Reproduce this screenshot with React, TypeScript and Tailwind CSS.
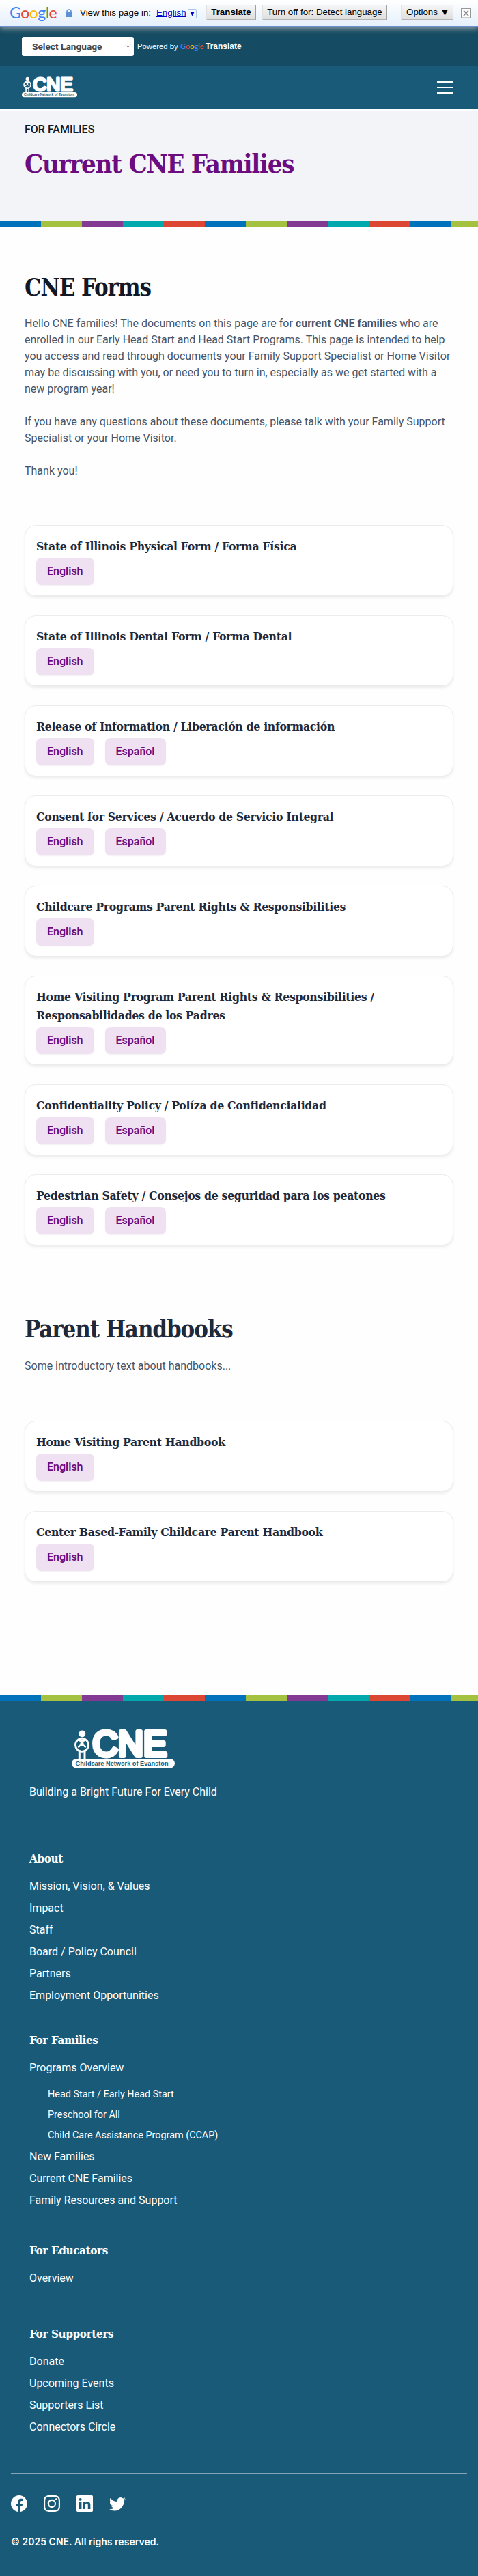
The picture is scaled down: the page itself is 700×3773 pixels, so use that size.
import { BsFacebook, BsInstagram, BsLinkedin, BsTwitter } from "react-icons/bs";

const slab =
  "[font-family:'Roboto_Slab','DejaVu_Serif_Condensed','DejaVu_Serif',serif] font-bold";

const stripeColors = ["bg-[#0072bc]", "bg-[#a4c140]", "bg-[#833a92]", "bg-[#02a9ac]", "bg-[#dc4733]"];

function Stripe() {
  return (
    <div className="flex h-[10px] w-full overflow-hidden">
      {Array.from({ length: 12 }, (_, i) => (
        <div key={i} className={`h-full w-[60px] shrink-0 ${stripeColors[i % 5]}`} />
      ))}
    </div>
  );
}

function GoogleWord({ className }: { className: string }) {
  return (
    <span className={`shrink-0 [font-family:Lato,sans-serif] ${className}`}>
      <span className="text-[#4285f4]">G</span>
      <span className="text-[#ea4335]">o</span>
      <span className="text-[#fbbc05]">o</span>
      <span className="text-[#4285f4]">g</span>
      <span className="text-[#34a853]">l</span>
      <span className="text-[#ea4335]">e</span>
    </span>
  );
}

function Logo({ className }: { className: string }) {
  return (
    <svg viewBox="0 0 151 56" className={`overflow-visible ${className}`}>
      <circle cx="15.3" cy="5.500" r="4.9" fill="#fff" />
      <circle cx="15" cy="21.800" r="9.500" fill="none" stroke="#fff" strokeWidth="2.800" />
      <path d="M9 13.500q6 4.500 12 0" fill="none" stroke="#fff" strokeWidth="3" />
      <circle cx="15" cy="19.500" r="2.500" fill="#fff" />
      <path d="M10.200 24.500q4.800 -5.500 9.600 0" fill="none" stroke="#fff" strokeWidth="2.600" strokeLinecap="round" />
      <path d="M11.300 29.500v13M19 29.500v13" stroke="#fff" strokeWidth="3" />
      <text
        x="30.500"
        y="38"
        textLength="109"
        lengthAdjust="spacingAndGlyphs"
        fontFamily="Liberation Sans"
        fontWeight="400"
        fontSize="51"
        fill="#fff"
        stroke="#fff"
        strokeWidth="6"
        strokeLinejoin="round"
      >
        CNE
      </text>
      <rect x="0" y="42" width="151" height="13.500" rx="6.700" fill="#fff" />
      <text
        x="5.500"
        y="51.800"
        textLength="136"
        lengthAdjust="spacingAndGlyphs"
        fontFamily="Liberation Sans"
        fontWeight="700"
        fontSize="9"
        fill="#195a78"
      >
        Childcare Network of Evanston
      </text>
    </svg>
  );
}

function TranslateBar() {
  const button =
    "flex h-[23px] shrink-0 items-center justify-center whitespace-nowrap border border-[#e0e0e0] border-r-[#a0a0a0] border-b-2 border-b-[#b4b4b4] bg-gradient-to-b from-[#f5f5f5] to-[#dfdfdf]";
  return (
    <div className="relative z-10 h-10 border-b border-[#e8eefa] bg-gradient-to-b from-white to-[#e4effb] [font-family:'Liberation_Sans',Arial,sans-serif] text-[13.3px] text-black shadow-[0_2px_8px_rgba(180,180,180,0.8)]">
      <div className="flex h-[39px] items-start border-b border-[#6b90da]">
        <GoogleWord className="ml-[14px] mt-[1px] w-[82px] text-[23px] leading-[34px] tracking-[-0.5px]" />
        <svg viewBox="0 0 10 12" className="mt-[13px] h-3 w-[10px] shrink-0">
          <path d="M2 6V4a3 3 0 0 1 6 0v2" fill="none" stroke="#5c8fd6" strokeWidth="1.500" />
          <rect x="0.500" y="5" width="9" height="7" fill="#5c8fd6" />
        </svg>
        <span className="ml-[11px] mt-[9px] w-[112px] shrink-0 whitespace-nowrap leading-5">View this page in:</span>
        <span className="mt-[9px] w-[46px] shrink-0 leading-5 text-[#0000cc] underline">English</span>
        <span className="mt-[13px] flex h-[14px] w-[13px] shrink-0 items-center justify-center rounded-[2px] border border-[#a9c6ec]">
          <svg viewBox="0 0 8 7" className="h-[7px] w-[7px]">
            <path d="M0.500 0h7L4 7z" fill="#0000cc" />
          </svg>
        </span>
        <div className={`ml-[14px] mt-[7px] w-[73px] font-bold ${button}`}>Translate</div>
        <div className={`ml-[9px] mt-[7px] w-[183px] ${button}`}>Turn off for: Detect language</div>
        <div className={`ml-5 mt-[7px] w-[77px] ${button}`}>
          Options
          <svg viewBox="0 0 9 9" className="ml-[6px] h-[9px] w-[9px]">
            <path d="M0 0h9L4.500 9z" fill="#000" />
          </svg>
        </div>
        <svg viewBox="0 0 15 15" className="ml-[11px] mt-[12px] h-[15px] w-[15px] shrink-0">
          <rect x="0.500" y="0.500" width="14" height="13.500" fill="#fff" stroke="#999" />
          <path d="M4 3.500l7 7.500M11 3.500l-7 7.500" stroke="#888" strokeWidth="1.800" />
        </svg>
      </div>
    </div>
  );
}

function Header() {
  return (
    <header>
      <div className="flex h-14 items-center bg-[#164c63] pl-8 [font-family:'Liberation_Sans',Arial,sans-serif] text-[11.300px] text-white">
        <div className="flex h-7 w-[164px] shrink-0 items-center justify-between rounded-[3px] bg-white pl-[15px] pr-1 [font-family:Roboto,sans-serif] text-[13.700px] font-bold text-[#444]">
          Select Language
          <svg viewBox="0 0 10 6" className="h-[6px] w-[9px]">
            <path d="M1 0.500l4 4 4-4" fill="none" stroke="#777" />
          </svg>
        </div>
        <span className="ml-[5px] w-[58px] whitespace-nowrap">Powered by</span>
        <GoogleWord className="ml-[5px] w-[37px] text-[11px] font-medium" />
        <span className="text-[12px] font-bold">Translate</span>
      </div>
      <div className="flex h-16 items-center justify-between bg-[#195a78] px-8">
        <Logo className="mb-px h-[31px] w-[81px]" />
        <div className="mr-1 flex w-6 flex-col gap-[6px]">
          <div className="h-[2px] bg-white" />
          <div className="h-[2px] bg-white" />
          <div className="h-[2px] bg-white" />
        </div>
      </div>
    </header>
  );
}

type Doc = { title: string; second?: string; langs: string[] };

const both = ["English", "Español"];
const forms: Doc[] = [
  { title: "State of Illinois Physical Form / Forma Física", langs: ["English"] },
  { title: "State of Illinois Dental Form / Forma Dental", langs: ["English"] },
  { title: "Release of Information / Liberación de información", langs: both },
  { title: "Consent for Services / Acuerdo de Servicio Integral", langs: both },
  { title: "Childcare Programs Parent Rights & Responsibilities", langs: ["English"] },
  {
    title: "Home Visiting Program Parent Rights & Responsibilities /",
    second: "Responsabilidades de los Padres",
    langs: both,
  },
  { title: "Confidentiality Policy / Políza de Confidencialidad", langs: both },
  { title: "Pedestrian Safety / Consejos de seguridad para los peatones", langs: both },
];
const handbooks: Doc[] = [
  { title: "Home Visiting Parent Handbook", langs: ["English"] },
  { title: "Center Based-Family Childcare Parent Handbook", langs: ["English"] },
];

function Cards({ docs }: { docs: Doc[] }) {
  return (
    <div className="flex flex-col gap-7">
      {docs.map((d) => (
        <div
          key={d.title}
          className="rounded-2xl border border-[#ebecef] bg-white px-4 pb-[15px] pt-[17px] shadow-[0_3px_5px_-1px_rgba(0,0,0,0.09)]"
        >
          <h3 className={`${slab} whitespace-nowrap text-[17.500px] leading-[27px] tracking-[-0.32px] text-[#1e293b]`}>
            {d.title}
            {d.second && <span className="block">{d.second}</span>}
          </h3>
          <div className="mt-[3px] flex gap-4">
            {d.langs.map((l) => (
              <span
                key={l}
                className="flex h-10 items-center rounded-lg bg-[#efe1f2] px-4 text-base font-semibold text-[#6b0d80] shadow-[0_1px_2px_rgba(0,0,0,0.06)]"
              >
                {l}
              </span>
            ))}
          </div>
        </div>
      ))}
    </div>
  );
}

function FooterHeading({ children }: { children: string }) {
  return <h4 className={`${slab} text-[17px] leading-[28px] tracking-[-0.400px]`}>{children}</h4>;
}

function Links({ items }: { items: string[] }) {
  return (
    <ul>
      {items.map((t) => (
        <li key={t} className="h-8 leading-8">
          {t}
        </li>
      ))}
    </ul>
  );
}

function Footer() {
  return (
    <footer className="h-[1281px] bg-[#195a78] text-base text-white">
      <div className="h-[1130px] px-[43px] pt-[42px]">
        <Logo className="ml-[62px] h-[56px] w-[151px]" />
        <p className="mt-[23px] leading-6">Building a Bright Future For Every Child</p>
        <div className="mt-[71px]">
          <FooterHeading>About</FooterHeading>
          <div className="mt-[11px]">
            <Links
              items={["Mission, Vision, & Values", "Impact", "Staff", "Board / Policy Council", "Partners", "Employment Opportunities"]}
            />
          </div>
        </div>
        <div className="mt-[35px]">
          <FooterHeading>For Families</FooterHeading>
          <div className="mt-[11px]">
            <Links items={["Programs Overview"]} />
            <ul className="mt-2 pl-[27px] text-[14.400px] leading-[30px]">
              <li>Head Start / Early Head Start</li>
              <li>Preschool for All</li>
              <li>Child Care Assistance Program (CCAP)</li>
            </ul>
            <Links items={["New Families", "Current CNE Families", "Family Resources and Support"]} />
          </div>
        </div>
        <div className="mt-[43px]">
          <FooterHeading>For Educators</FooterHeading>
          <div className="mt-[11px]">
            <Links items={["Overview"]} />
          </div>
        </div>
        <div className="mt-[51px]">
          <FooterHeading>For Supporters</FooterHeading>
          <div className="mt-[11px]">
            <Links items={["Donate", "Upcoming Events", "Supporters List", "Connectors Circle"]} />
          </div>
        </div>
      </div>
      <div className="mx-4 border-t-2 border-[#84a5b5] pt-[31px]">
        <div className="flex gap-6">
          <BsFacebook className="h-6 w-6" />
          <BsInstagram className="h-6 w-6" />
          <BsLinkedin className="h-6 w-6" />
          <BsTwitter className="h-6 w-6" />
        </div>
        <p className="mt-[32px] [font-family:Inter,sans-serif] text-[14px] font-semibold leading-6 tracking-[0.03px]">
          © 2025 CNE. All righs reserved.
        </p>
      </div>
    </footer>
  );
}

export default function App() {
  return (
    <div className="min-h-[3773px] w-full overflow-hidden bg-[#fefefe] [font-family:Roboto,sans-serif]">
      <TranslateBar />
      <Header />
      <section className="mt-[2px] h-[161px] bg-[#f3f4f8] px-9 pt-4">
        <p className="text-base font-medium leading-6 text-[#111827]">FOR FAMILIES</p>
        <h1 className={`${slab} mt-[14px] whitespace-nowrap text-[38px] leading-[48px] tracking-[-1.250px] text-[#6b0d80]`}>
          Current CNE Families
        </h1>
      </section>
      <Stripe />
      <main className="h-[2149px] px-9 pt-[68px]">
        <h2 className={`${slab} text-[34.500px] leading-10 tracking-[-1.150px] text-[#111827]`}>CNE Forms</h2>
        <div className="mt-[21px] whitespace-nowrap text-base leading-6 text-[#475569]">
          <p>
            Hello CNE families! The documents on this page are for <b>current CNE families</b> who are
            <br />
            enrolled in our Early Head Start and Head Start Programs. This page is intended to help
            <br />
            you access and read through documents your Family Support Specialist or Home Visitor
            <br />
            may be discussing with you, or need you to turn in, especially as we get started with a
            <br />
            new program year!
          </p>
          <p className="mt-6">
            If you have any questions about these documents, please talk with your Family Support
            <br />
            Specialist or your Home Visitor.
          </p>
          <p className="mt-6">Thank you!</p>
        </div>
        <div className="mt-[67px]">
          <Cards docs={forms} />
        </div>
        <h2 className={`${slab} mt-[103px] text-[34.500px] leading-10 tracking-[-1.100px] text-[#1e293b]`}>Parent Handbooks</h2>
        <p className="mt-[22px] leading-6 text-[#475569]">Some introductory text about handbooks...</p>
        <div className="mt-[68px]">
          <Cards docs={handbooks} />
        </div>
      </main>
      <Stripe />
      <Footer />
    </div>
  );
}
